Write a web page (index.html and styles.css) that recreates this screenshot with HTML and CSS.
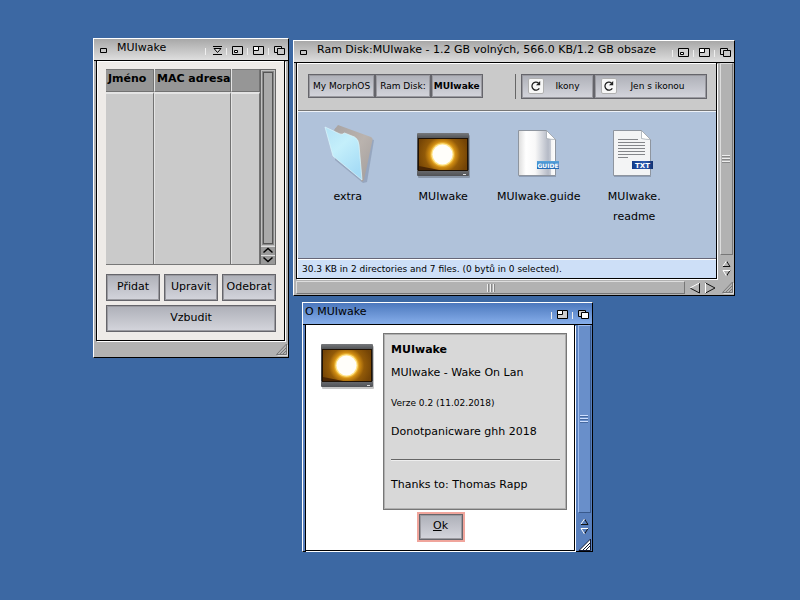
FILE: index.html
```html
<!DOCTYPE html>
<html lang="cs">
<head>
<meta charset="utf-8">
<title>MUIwake</title>
<meta name="viewport" content="width=device-width, initial-scale=1">
<link rel="stylesheet" href="styles.css">
</head>
<body>
<svg class="defs" aria-hidden="true">
  <defs>
    <linearGradient id="gFrame" x1="0" y1="0" x2="0" y2="1"><stop offset="0" stop-color="#77797c"/><stop offset=".12" stop-color="#515356"/><stop offset=".86" stop-color="#3c3d40"/><stop offset=".87" stop-color="#6a6c70"/><stop offset="1" stop-color="#505256"/></linearGradient>
    <radialGradient id="gSun" gradientUnits="userSpaceOnUse" cx="26.500" cy="22.500" r="26"><stop offset="0" stop-color="#fff0a0"/><stop offset=".4" stop-color="#ffd65a"/><stop offset=".5" stop-color="#d08c12"/><stop offset=".68" stop-color="#925a08"/><stop offset="1" stop-color="#744406"/></radialGradient>
    <linearGradient id="gFolder" x1="0" y1="0" x2=".6" y2="1"><stop offset="0" stop-color="#b4e2f6"/><stop offset=".45" stop-color="#c4effb"/><stop offset="1" stop-color="#a6dcf6"/></linearGradient>
    <linearGradient id="gBack" x1="0" y1="0" x2="1" y2="1"><stop offset="0" stop-color="#a8a3a2"/><stop offset=".5" stop-color="#bab3ae"/><stop offset="1" stop-color="#a19c9b"/></linearGradient>
    <linearGradient id="gGuide"><stop offset="0" stop-color="#dcdcdc"/><stop offset=".2" stop-color="#fff"/><stop offset=".45" stop-color="#f8f8f8"/><stop offset=".8" stop-color="#b5bac6"/><stop offset=".88" stop-color="#c9cdd6"/><stop offset=".89" stop-color="#f4f4f4"/><stop offset="1" stop-color="#fff"/></linearGradient>
    <linearGradient id="gBadge" x1="0" y1="0" x2="0" y2="1"><stop offset="0" stop-color="#57a3dc"/><stop offset="1" stop-color="#1f68b4"/></linearGradient>
    <linearGradient id="gTxt" x1="0" y1="0" x2="1" y2="0"><stop offset="0" stop-color="#123a88"/><stop offset=".6" stop-color="#2c5cb2"/><stop offset="1" stop-color="#11306f"/></linearGradient>
    <symbol id="close" viewBox="0 0 7 5"><path d="M.5.5h6v4h-6z" fill="none" stroke="currentColor"/></symbol>
    <symbol id="iconify" viewBox="0 0 11 10"><path d="M1 .5h9M1 8.500h9" fill="none" stroke="#000"/><path d="M2 2.500h7L5.500 6.500z" fill="#ddd" stroke="#000"/></symbol>
    <symbol id="snap" viewBox="0 0 12 10"><path d="M.5.5h10v8H.5z" class="glyph"/><path d="M2.500 4.500h3v2h-3z" fill="#fff" stroke="#000"/></symbol>
    <symbol id="zoomg" viewBox="0 0 12 10"><path d="M.5.5h10v8H.5z" class="glyph"/><path d="M.5.5h5v4h-5z" fill="#fff" stroke="#000"/></symbol>
    <symbol id="depth" viewBox="0 0 12 10"><path d="M.5.5h7v6h-7z" class="glyph"/><path d="M3.500 2.500h7v6h-7z" class="front" stroke="#000"/></symbol>
    <symbol id="size" viewBox="0 0 13 13"><path d="M1.500 11.500L11.500 1v10.500z" fill="none" stroke="#777"/><path d="M4.500 11.500l7-7M7.500 11.500l4-4" stroke="#777"/><path d="M2.500 12.500h10V2" fill="none" stroke="#ddd"/></symbol>
    <symbol id="sizeActive" viewBox="0 0 13 13"><path d="M1 12.500L12.500 1v11.500z" fill="#fff" stroke="#101830"/><path d="M5 12l7-7M8 12l4-4" stroke="#101830"/></symbol>
    <symbol id="up" viewBox="0 0 9 7"><path d="M4.500 1L8 6.500H1" fill="none" stroke="#111"/><path d="M1 6L4.500 1" stroke="#fff"/></symbol>
    <symbol id="down" viewBox="0 0 9 7"><path d="M8 .5L4.500 6" stroke="#111"/><path d="M8 .5H1L4.500 6" fill="none" stroke="#fff"/></symbol>
    <symbol id="left" viewBox="0 0 12 12"><path d="M10.500 1v10L1 6" fill="none" stroke="#111"/><path d="M1 6l9.500-5" stroke="#fff"/></symbol>
    <symbol id="right" viewBox="0 0 12 12"><path d="M1.500 11L11 6 1.500 1" fill="none" stroke="#111"/><path d="M1.500 11V1" stroke="#fff"/></symbol>
    <symbol id="reload" viewBox="0 0 16 16"><rect x=".5" y=".5" width="15" height="15" rx="1.500" fill="#f7f7f7" stroke="#b0b0b0"/><path d="M11.300 10.300A4 4 0 1 1 10.500 5" fill="none" stroke="#222" stroke-width="1.300"/><path d="M12.200 3v4.300H8z" fill="#222"/></symbol>
    <symbol id="screen" viewBox="0 0 54 48">
      <rect x="2" y="3" width="52" height="43" rx="1" fill="#000" opacity=".22"/>
      <rect x="1" y="1" width="52" height="43" rx="1" fill="url(#gFrame)"/>
      <rect x="2" y="6" width="50" height="33" fill="#201204"/>
      <rect x="3" y="7" width="48" height="31" fill="url(#gSun)"/>
      <path d="M3 34l20 4H3z" fill="#4a2604"/>
      <circle cx="26.500" cy="22.500" r="11" fill="#ffe48e"/><circle cx="26.500" cy="22.500" r="10" fill="#fffefa"/>
      <path d="M47 42.500h3" stroke="#ddd"/>
    </symbol>
  </defs>
</svg>
<main class="desktop">

  <section class="window wake" aria-label="MUIwake">
    <header class="title">
      <button class="gadget" aria-label="Zavřít"><svg width="7" height="5"><use href="#close"/></svg></button>
      <h1>MUIwake</h1>
      <div class="gadgets">
        <button class="gadget" aria-label="Ikonifikovat"><svg width="11" height="10"><use href="#iconify"/></svg></button>
        <button class="gadget" aria-label="Snapshot"><svg width="12" height="10"><use href="#snap"/></svg></button>
        <button class="gadget" aria-label="Zvětšit"><svg width="12" height="10"><use href="#zoomg"/></svg></button>
        <button class="gadget" aria-label="Hloubka"><svg width="12" height="10"><use href="#depth"/></svg></button>
      </div>
    </header>
    <div class="body">
      <div class="pane form">
        <div class="list">
          <table>
            <colgroup><col class="c1"><col class="c2"><col></colgroup>
            <thead><tr><th>Jméno</th><th>MAC adresa</th><th></th></tr></thead>
            <tbody><tr><td></td><td></td><td></td></tr></tbody>
          </table>
          <div class="listbar">
            <div class="track"><div class="thumb"></div></div>
            <button aria-label="Nahoru"><svg width="12" height="7" viewBox="0 0 12 7"><path d="M1.500 5.500l4.500-4 4.500 4" class="chev"/></svg></button>
            <button aria-label="Dolů"><svg width="12" height="7" viewBox="0 0 12 7"><path d="M1.500 1.500l4.500 4 4.500-4" class="chev"/></svg></button>
          </div>
        </div>
        <div class="row">
          <button class="btn">Přidat</button><button class="btn">Upravit</button><button class="btn">Odebrat</button>
        </div>
        <button class="btn">Vzbudit</button>
      </div>
    </div>
    <footer class="bottom"><svg class="sizer" width="13" height="13"><use href="#size"/></svg></footer>
  </section>

  <section class="window ram" aria-label="Ram Disk">
    <header class="title">
      <button class="gadget" aria-label="Zavřít"><svg width="7" height="5"><use href="#close"/></svg></button>
      <h1>Ram Disk:MUIwake - 1.2 GB volných, 566.0 KB/1.2 GB obsaze</h1>
      <div class="gadgets">
        <button class="gadget" aria-label="Snapshot"><svg width="12" height="10"><use href="#snap"/></svg></button>
        <button class="gadget" aria-label="Zvětšit"><svg width="12" height="10"><use href="#zoomg"/></svg></button>
        <button class="gadget" aria-label="Hloubka"><svg width="12" height="10"><use href="#depth"/></svg></button>
      </div>
    </header>
    <div class="body">
      <div class="pane">
        <div class="toolbar">
          <nav class="group"><button class="btn small">My MorphOS</button><button class="btn small">Ram Disk:</button><button class="btn small current">MUIwake</button></nav>
          <div class="group modes">
            <button class="btn small mode"><svg width="16" height="16"><use href="#reload"/></svg><span>Ikony</span></button>
            <button class="btn small mode wide"><svg width="16" height="16"><use href="#reload"/></svg><span>Jen s ikonou</span></button>
          </div>
        </div>
        <div class="files">
          <figure>
            <svg width="54" height="64" viewBox="0 0 54 64"><path d="M14 5l39 12-7 42-4 1-28-23z" fill="#465570" opacity=".25"/><path d="M13 7l4-5 33 12q2 1 1.500 3L43 57l-2 2z" fill="url(#gBack)"/><path d="M4 4l15 7q2 1 4.500-1l10 4q4 2 4.500 8l3 35L12 33z" fill="url(#gFolder)" stroke="#ddf6fc" stroke-width=".7"/></svg>
            <figcaption>extra</figcaption>
          </figure>
          <figure><svg width="54" height="64" viewBox="0 -9 54 64"><use href="#screen" width="54" height="48"/></svg><figcaption>MUIwake</figcaption></figure>
          <figure>
            <svg width="54" height="64" viewBox="0 0 54 64"><path d="M7 8.500h28l9 9V54H7z" fill="#5c6a80" opacity=".4"/><path d="M6.500 7.500h28l9 9v36h-37z" fill="url(#gGuide)" stroke="#8e959f"/><path d="M34.500 7.500v8q4 1 9 1z" fill="#fff" stroke="#9aa0a8" stroke-width=".7"/><rect x="25" y="38" width="22" height="8" fill="url(#gBadge)"/><text x="36" y="44.500" class="tag guide">GUIDE</text></svg>
            <figcaption>MUIwake.guide</figcaption>
          </figure>
          <figure>
            <svg width="54" height="64" viewBox="0 0 54 64"><path d="M7 8.500h28l9 9V54H7z" fill="#5c6a80" opacity=".4"/><path d="M6.500 7.500h28l9 9v36h-37z" fill="#f3f4f5" stroke="#8e959f"/><path d="M34.500 7.500v8q4 1 9 1z" fill="#fff" stroke="#9aa0a8" stroke-width=".7"/><path d="M11 16.500h20M11 19.500h27M11 22.500h27M11 25.500h27M11 28.500h27M11 31.500h27M11 34.500h10" stroke="#84868a"/><rect x="25" y="38" width="21" height="8" fill="url(#gTxt)"/><text x="35.500" y="44.500" class="tag">TXT</text></svg>
            <figcaption>MUIwake.<br>readme</figcaption>
          </figure>
        </div>
        <p class="status">30.3 KB in 2 directories and 7 files. (0 bytů in 0 selected).</p>
      </div>
      <div class="vbar"><div class="knob"><i></i></div><svg width="9" height="7"><use href="#up"/></svg><svg width="9" height="7"><use href="#down"/></svg></div>
    </div>
    <footer class="bottom hbar"><div class="knob"><i></i></div><svg width="12" height="12"><use href="#left"/></svg><svg width="12" height="12"><use href="#right"/></svg><svg class="sizer" width="13" height="13"><use href="#size"/></svg></footer>
  </section>

  <section class="window about" aria-label="O MUIwake">
    <header class="title">
      <h1>O MUIwake</h1>
      <div class="gadgets">
        <button class="gadget" aria-label="Zvětšit"><svg width="12" height="10"><use href="#zoomg"/></svg></button>
        <button class="gadget" aria-label="Hloubka"><svg width="12" height="10"><use href="#depth"/></svg></button>
      </div>
    </header>
    <div class="body">
      <div class="pane white">
        <div class="info">
          <svg class="logo" width="54" height="48"><use href="#screen"/></svg>
          <div class="text">
            <h2>MUIwake</h2>
            <p>MUIwake - Wake On Lan</p>
            <p class="version">Verze 0.2 (11.02.2018)</p>
            <p>Donotpanicware ghh 2018</p>
            <hr>
            <p>Thanks to: Thomas Rapp</p>
          </div>
        </div>
        <button class="btn ok"><u>O</u>k</button>
      </div>
      <div class="vbar"><div class="knob"><i></i></div><svg width="9" height="7"><use href="#up"/></svg><svg width="9" height="7"><use href="#down"/></svg><svg class="sizer" width="13" height="13"><use href="#sizeActive"/></svg></div>
    </div>
  </section>
</main>
</body>
</html>
```
FILE: styles.css
```css
* { box-sizing: border-box; }
body { margin: 0; font: 11px/20px "DejaVu Sans", sans-serif; color: #000; }
h1, h2, p, figure { margin: 0; font-size: inherit; font-weight: normal; }
button { font: inherit; color: inherit; padding: 0; border: 0; background: none; }
svg { display: block; flex: none; }
.defs { position: absolute; width: 0; height: 0; }
.desktop { position: relative; min-height: 100vh; background: #3c68a3; overflow: hidden; }

/* windows */
.window { position: absolute; display: flex; flex-direction: column; background: #b2b2b2; border: 1px solid; border-color: #fff #000 #000 #fff; --front: #c8c8c8; }
.wake { left: 93px; top: 38px; width: 196px; height: 320px; }
.ram { left: 293px; top: 40px; width: 442px; height: 256px; }
.about { left: 302px; top: 302px; width: 291px; height: 250px; background: #587fbd; --front: #fff; }

.title { flex: none; display: flex; height: 22px; border-bottom: 1px solid #000; background: linear-gradient(#a8a8a8, #dedede); }
.about .title { background: linear-gradient(#4c78bd, #86aeea); }
.title h1 { flex: 1; min-width: 0; padding-left: 10px; line-height: 17px; white-space: nowrap; overflow: hidden; }
.about .title h1 { padding-left: 2px; }
.title > .gadget { padding: 9px 0 0 6px; align-self: flex-start; }
.gadgets { display: flex; padding-top: 7px; padding-right: 2px; align-items: flex-start; }
.gadgets .gadget { width: 21px; height: 10px; display: flex; justify-content: flex-end; background: linear-gradient(#eee, #eee) 3px 2px / 1px 7px no-repeat; }
.glyph { fill: #d0d0d0; stroke: #000; }
.front { fill: var(--front); }

.body { flex: 1; min-height: 0; display: flex; padding-left: 2px; }
.wake .body { padding-right: 3px; }
.pane { flex: 1; min-width: 0; display: flex; flex-direction: column; border: solid #000; border-width: 0 1px 1px; box-shadow: 1px 1px #fff, inset 1px 1px #fff; padding: 1px 0 0 1px; background: #cacaca; }
.white { background: #fff; padding-top: 0; }
.form { background: #eeebe8; padding: 8px 8px 8px 9px; gap: 4px; }
.bottom { flex: none; display: flex; justify-content: flex-end; align-items: center; height: 16px; padding-top: 1px; }

/* buttons */
.btn { height: 27px; line-height: 20px; padding-bottom: 2px; border: 1px solid #65656b; outline: 1px solid #9a9aa0; outline-offset: -2px; background: linear-gradient(#aeb0b8, #d4d5dc); white-space: nowrap; }
.row { display: flex; gap: 4px; margin-top: 5px; }
.row .btn { flex: 1 1 0; min-width: 0; }

/* host list */
.list { flex: 1; min-height: 0; display: flex; border-bottom: 1px solid #777; }
table { flex: 1; width: 100%; min-width: 0; height: 100%; border-collapse: separate; border-spacing: 0; table-layout: fixed; background: #cacaca; }
.c1 { width: 48px; }
.c2 { width: 77px; }
th { height: 23px; padding: 0 0 2px 2px; text-align: left; font-weight: bold; white-space: nowrap; background: #969696; border: solid #727272; border-width: 0 1px 1px 0; box-shadow: inset 0 1px #787878; }
td { border-right: 1px solid #727272; box-shadow: 1px 0 #eee; border-top: 2px solid #e4e4e4; }
th + th, td + td { border-left: 1px solid #e4e4e4; }
.listbar { flex: none; width: 16px; display: flex; flex-direction: column; background: #a6a6a6; border: 1px solid #666; border-bottom: 0; }
.track { flex: 1; padding: 2px; background: #c0c0c0; }
.thumb { height: 100%; border: 1px solid #555; outline: 1px solid #888; background: #aaa; }
.listbar button { height: 9px; border-top: 1px solid #ddd; display: flex; justify-content: center; background: #999; }
.chev { fill: none; stroke: #000; stroke-width: 1.5; }

/* file browser */
.toolbar { flex: none; display: flex; justify-content: space-between; padding: 10px 9px 11px 10px; border-bottom: 1px solid #777; }
.group { display: flex; align-items: flex-start; }
.small { font-size: 9px; height: 24px; padding: 0 4px; }
.current { font-weight: bold; padding: 0 2px; }
.modes { border-left: 1px solid #666; padding-left: 5px; }
.mode { display: flex; align-items: center; width: 73px; height: 25px; padding: 0 6px 1px; }
.mode span { flex: 1; text-align: center; padding-left: 4px; }
.wide { width: 113px; padding-right: 12px; }
.files { flex: 1; min-height: 0; display: flex; padding: 11px 34px 0 2px; background: #b0c2da; border-top: 1px solid #eef2f8; }
.files figure { flex: 1 1 0; min-width: 0; display: flex; flex-direction: column; align-items: center; text-align: center; white-space: nowrap; }
.tag { font: bold 7px "DejaVu Sans", sans-serif; fill: #fff; text-anchor: middle; }
.guide { font-size: 6px; }
.status { flex: none; font-size: 9px; line-height: 18px; padding: 1px 0 0 4px; background: #cddff7; border-top: 1px solid #667; box-shadow: inset 0 1px #fff; }

/* scroll bars */
.vbar { flex: none; width: 16px; margin-left: 1px; display: flex; flex-direction: column; align-items: center; gap: 3px; }
.ram .vbar { padding-bottom: 2px; }
.knob { flex: 1; display: flex; align-items: center; justify-content: center; border: 1px solid; border-color: #ddd #777 #777 #ddd; background: #b2b2b2; }
.vbar .knob { width: 13px; margin-bottom: 2px; }
.knob i { width: 8px; height: 8px; background: repeating-linear-gradient(#eee 0 1px, #888 1px 2px, transparent 2px 3px); }
.hbar { gap: 3px; padding-left: 2px; }
.hbar .knob { height: 13px; margin-right: 1px; }
.hbar .knob i { background: repeating-linear-gradient(90deg, #eee 0 1px, #888 1px 2px, transparent 2px 3px); }
.hbar .sizer { margin-left: 2px; }
.about .knob { background: #698fca; border-color: #9fbdf0 #38598c #38598c #9fbdf0; }
.about .knob i { background: repeating-linear-gradient(#cfe0ff 0 1px, #46699f 1px 2px, transparent 2px 3px); }

/* about */
.info { display: flex; align-items: flex-start; padding: 8px 7px 0 13px; }
.logo { margin: 10px 9px 0 0; }
.text { flex: 1; padding: 6px 6px 14px 7px; background: #d8d8d8; border: 1px solid #777; outline: 1px solid #b0b0b0; outline-offset: -2px; }
.text h2 { font-weight: bold; margin-bottom: 3px; }
.text p { line-height: 20px; }
.text .version { font-size: 9px; margin: 10px 0 9px; }
.text hr { margin: 17px 0 14px; border: 0; border-top: 1px solid #666; border-bottom: 1px solid #eee; }
.ok { align-self: center; width: 44px; height: 26px; margin: 4px 0 0; box-shadow: 0 0 0 2px #f0a59c; }
```
